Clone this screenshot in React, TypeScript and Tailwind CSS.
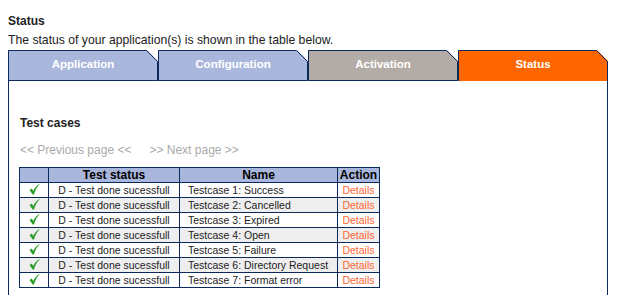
const tabs = [
  { label: 'Application', fill: '#a9b7dc', active: false },
  { label: 'Configuration', fill: '#a9b7dc', active: false },
  { label: 'Activation', fill: '#b3aba5', active: false },
  { label: 'Status', fill: '#ff6600', active: true },
];

const cases = [
  'Testcase 1: Success',
  'Testcase 2: Cancelled',
  'Testcase 3: Expired',
  'Testcase 4: Open',
  'Testcase 5: Failure',
  'Testcase 6: Directory Request',
  'Testcase 7: Format error',
];

const Tab = ({ label, fill, active }: { label: string; fill: string; active: boolean }) => (
  <div className="relative w-[150px] h-[31px]">
    <svg className="absolute inset-0" width="150" height="31" viewBox="0 0 150 31">
      <path d="M0,0 H139 L150,11 V31 H0 Z" fill={fill} />
      <path
        d={active ? 'M0.5,31 V0.5 H138.5 L149.5,11.5 V31' : 'M0.5,31 V0.5 H138.5 L149.5,11.5 V30.5 H0.5'}
        fill="none"
        stroke="#0b2a5b"
        strokeWidth="1"
      />
    </svg>
    <div className="relative pt-[7px] text-center text-[11.5px] leading-[14px] font-bold text-white">{label}</div>
  </div>
);

const Check = () => (
  <svg width="11" height="11" viewBox="0 0 11 11" className="inline-block align-[-1px]">
    <path d="M0.5,6 L2.8,4.6 L4.2,7 C5.6,3.8 7.6,1.6 10.5,0 L10.5,0.6 C8.2,2.8 6.4,6 5,10.5 L3.6,10.5 Z" fill="#2e9e2a" />
  </svg>
);

const App = () => {
  return (
    <div className="w-[618px] h-[295px] overflow-hidden bg-white font-['Liberation_Sans',Arial,sans-serif] text-[#222]">
      <div className="px-[8px] pt-[14px]">
        <h2 className="text-[12px] leading-[14px] font-bold">Status</h2>
        <p className="mt-[4px] text-[12.2px] leading-[16px]">The status of your application(s) is shown in the table below.</p>

        {/* Tabs */}
        <div className="mt-[2px] flex">
          {tabs.map((t) => (
            <Tab key={t.label} {...t} />
          ))}
        </div>

        {/* Content */}
        <div className="w-[600px] h-[220px] border-x border-[#0b2a5b] pl-[10px] pt-[35px]">
          <h3 className="pl-[1px] text-[12px] leading-[14px] font-bold">Test cases</h3>
          <div className="mt-[13px] pl-[1px] flex gap-[18px] text-[12px] leading-[14px] text-[#aaaaaa]">
            <span>&lt;&lt; Previous page &lt;&lt;</span>
            <span>&gt;&gt; Next page &gt;&gt;</span>
          </div>

          <table className="mt-[10px] border-collapse text-[10.5px] leading-[14px]">
            <thead>
              <tr className="h-[15px] bg-[#a9b7dc] text-[12px] font-bold text-black">
                <th className="w-[29px] border border-[#0b2a5b] p-0"></th>
                <th className="w-[131px] border border-[#0b2a5b] p-0">Test status</th>
                <th className="w-[158px] border border-[#0b2a5b] p-0">Name</th>
                <th className="w-[42px] border border-[#0b2a5b] p-0">Action</th>
              </tr>
            </thead>
            <tbody>
              {cases.map((c, i) => (
                <tr key={c} className={`h-[15px] ${i % 2 ? 'bg-[#eeeeee]' : 'bg-white'}`}>
                  <td className="border border-[#0b2a5b] p-0 text-center">
                    <Check />
                  </td>
                  <td className="border border-[#0b2a5b] p-0 text-center">D - Test done sucessfull</td>
                  <td className="border border-[#0b2a5b] p-0 pl-[8px]">{c}</td>
                  <td className="border border-[#0b2a5b] p-0 text-center text-[#ff6633]">Details</td>
                </tr>
              ))}
            </tbody>
          </table>
        </div>
      </div>
    </div>
  );
};

export default App;
